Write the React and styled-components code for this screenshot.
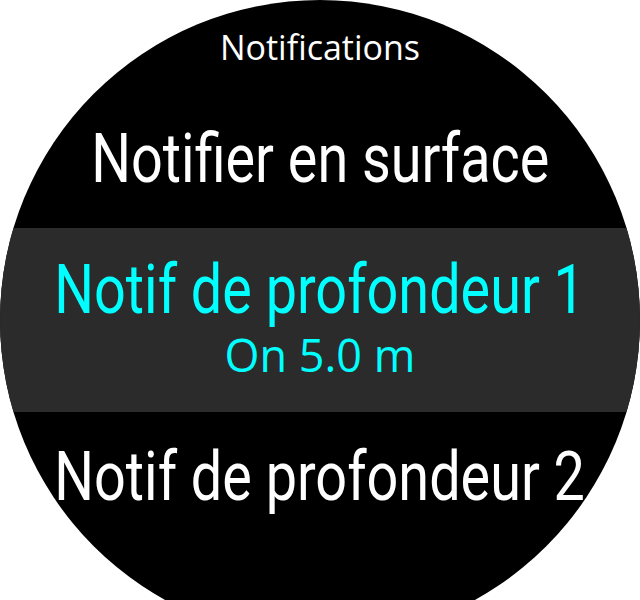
import React from 'react'
import styled, { createGlobalStyle } from 'styled-components'

const GlobalStyle = createGlobalStyle`
    html, body {
        margin: 0;
        padding: 0;
        background: #ffffff;
        overflow: hidden;
    }
`

const items = [
    { id: 'surface', label: 'Notifier en surface' },
    { id: 'depth1', label: 'Notif de profondeur 1', value: 'On 5.0 m', selected: true },
    { id: 'depth2', label: 'Notif de profondeur 2' },
]

const App = () => {
    return (
        <>
            <GlobalStyle />
            <S.Screen>
                <S.Face>
                    <S.Title>Notifications</S.Title>
                    {items.map((item, index) =>
                        item.selected ? (
                            <S.Selected key={item.id}>
                                <S.Row>
                                    <S.Label $active>{item.label}</S.Label>
                                </S.Row>
                                <S.Value>{item.value}</S.Value>
                            </S.Selected>
                        ) : (
                            <S.Row key={item.id} $gap={index === 0 ? 49 : 25}>
                                <S.Label>{item.label}</S.Label>
                            </S.Row>
                        ),
                    )}
                </S.Face>
            </S.Screen>
        </>
    )
}

const S = {
    Screen: styled.div`
        width: 640px;
        height: 600px;
        overflow: hidden;
        background: #ffffff;
    `,
    Face: styled.div`
        display: flex;
        flex-direction: column;
        width: 640px;
        height: 640px;
        border-radius: 50%;
        background: #000000;
        overflow: hidden;
    `,
    Title: styled.div`
        padding-top: 24px;
        font-family: 'Open Sans', 'Noto Sans', sans-serif;
        font-size: 34px;
        line-height: 46px;
        color: #ffffff;
        text-align: center;
    `,
    Row: styled.div`
        display: flex;
        justify-content: center;
        margin-top: ${({ $gap }) => $gap || 0}px;
        height: 80px;
    `,
    Label: styled.span`
        display: inline-block;
        white-space: nowrap;
        transform: scaleX(0.82);
        font-family: Roboto, 'Liberation Sans', sans-serif;
        font-size: 68px;
        line-height: 80px;
        color: ${({ $active }) => ($active ? '#00ffff' : '#ffffff')};
    `,
    Selected: styled.div`
        box-sizing: border-box;
        margin-top: 29px;
        height: 184px;
        padding-top: 22px;
        background: #2b2b2b;
    `,
    Value: styled.div`
        font-family: 'Open Sans', 'Noto Sans', sans-serif;
        font-size: 45px;
        line-height: 50px;
        color: #00ffff;
        text-align: center;
    `,
}

export default App
